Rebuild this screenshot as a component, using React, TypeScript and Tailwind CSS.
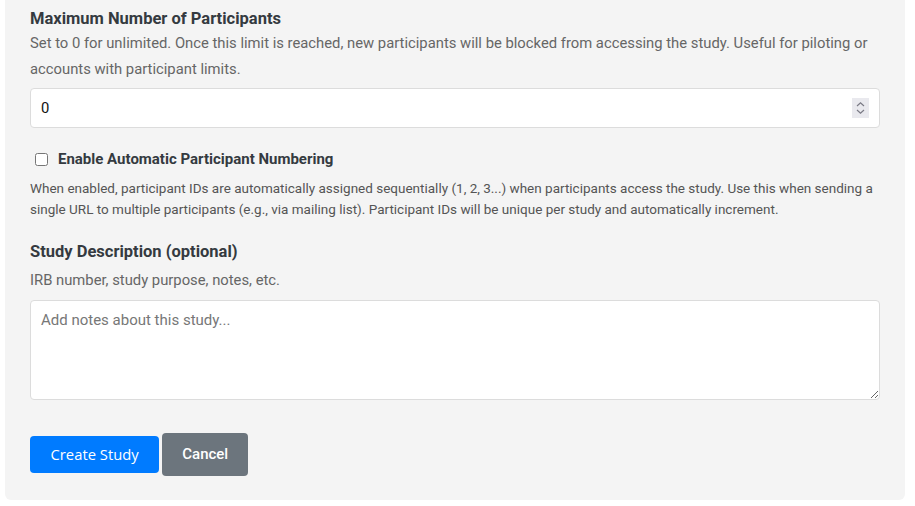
import { useState } from 'react';

export default function App() {
  const [maxParticipants, setMaxParticipants] = useState('0');
  const [autoNumber, setAutoNumber] = useState(false);
  const [notes, setNotes] = useState('');

  return (
    <div className="min-h-screen bg-white pl-[5px] pr-[10px]" style={{ fontFamily: 'Roboto, "Open Sans", sans-serif' }}>
      <div className="bg-[#f4f4f4] rounded-b-md pl-[25px] pr-[25px] pt-[7px] pb-[24px]">
        {/* Max participants */}
        <h3 className="text-[16.5px] font-bold leading-6 text-[#343a40]">Maximum Number of Participants</h3>
        <p className="-mt-px text-[14.8px] leading-[26px] text-[#666]">
          Set to 0 for unlimited. Once this limit is reached, new participants will be blocked from accessing the study. Useful for piloting or accounts with participant limits.
        </p>
        <div className="relative mt-[6px]">
          <input
            type="text"
            value={maxParticipants}
            onChange={(e) => setMaxParticipants(e.target.value)}
            className="block w-full h-[40px] bg-white border border-[#dcdcdc] rounded px-[10px] text-[14.8px] text-[#111] outline-none"
          />
          <div className="absolute right-[11px] top-[10px] w-[17px] h-[20px] bg-[#e9e9ee] flex items-center justify-center">
            <svg width="9" height="14" viewBox="0 0 9 14" fill="none" stroke="#7a7a85" strokeWidth="1.2">
              <path d="M1 5 L4.5 1.8 L8 5" />
              <path d="M1 9 L4.5 12.2 L8 9" />
            </svg>
          </div>
        </div>

        {/* Auto numbering */}
        <label className="mt-[21px] flex items-center h-5">
          <input
            type="checkbox"
            checked={autoNumber}
            onChange={(e) => setAutoNumber(e.target.checked)}
            className="ml-[5px] w-[13px] h-[13px] m-0"
          />
          <span className="ml-[10px] text-[15px] font-bold text-[#343a40]">Enable Automatic Participant Numbering</span>
        </label>
        <p className="mt-[9px] text-[13.5px] leading-[21px] text-[#555]">
          When enabled, participant IDs are automatically assigned sequentially (1, 2, 3...) when participants access the study. Use this when sending a single URL to multiple participants (e.g., via mailing list). Participant IDs will be unique per study and automatically increment.
        </p>

        {/* Description */}
        <h3 className="mt-[20px] text-[16.5px] font-bold leading-6 text-[#343a40]">Study Description (optional)</h3>
        <p className="mt-[3px] text-[14.8px] leading-[26px] text-[#666]">IRB number, study purpose, notes, etc.</p>
        <textarea
          value={notes}
          onChange={(e) => setNotes(e.target.value)}
          placeholder="Add notes about this study..."
          className="mt-[7px] block w-full h-[100px] bg-white border border-[#dcdcdc] rounded px-[10px] py-[8px] text-[15px] text-[#111] placeholder:text-[#777] outline-none"
        />

        {/* Actions */}
        <div className="mt-[33px] flex items-center gap-[3px]">
          <button
            className="h-[37px] px-[20.5px] rounded bg-[#007bff] text-white text-[14.8px]"
            style={{ fontFamily: '"Open Sans", sans-serif' }}
          >
            Create Study
          </button>
          <button className="h-[43px] px-5 rounded bg-[#6c757d] text-white text-[15px] font-medium">Cancel</button>
        </div>
      </div>
    </div>
  );
}
